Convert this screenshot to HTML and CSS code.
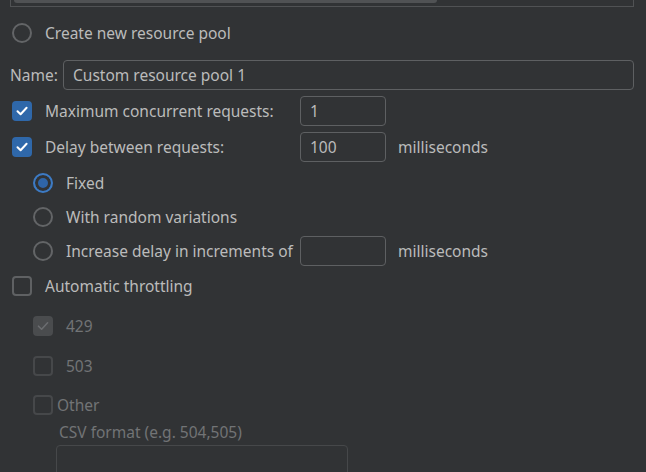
FILE: index.html
```html
<!DOCTYPE html>
<html>
<head>
    <title>Resource pool</title>
    <link rel="stylesheet" href="styles.css">
</head>
<body>
    <div class="pool-list">
        <div class="scroll-thumb"></div>
    </div>

    <div class="row row-create">
        <span class="radio"></span>
        <span class="label">Create new resource pool</span>
    </div>

    <div class="row row-name">
        <span class="name-label">Name:</span>
        <div class="field field-wide">Custom resource pool 1</div>
    </div>

    <div class="row row-option">
        <span class="check checked">
            <svg viewBox="0 0 20 20" width="20" height="20"><path d="M5.5 10.2 L8.6 13.2 L14.6 6.8" fill="none" stroke="#ffffff" stroke-width="2" stroke-linecap="round" stroke-linejoin="round"/></svg>
        </span>
        <span class="label label-fixed">Maximum concurrent requests:</span>
        <div class="field field-small">1</div>
    </div>

    <div class="row row-option">
        <span class="check checked">
            <svg viewBox="0 0 20 20" width="20" height="20"><path d="M5.5 10.2 L8.6 13.2 L14.6 6.8" fill="none" stroke="#ffffff" stroke-width="2" stroke-linecap="round" stroke-linejoin="round"/></svg>
        </span>
        <span class="label label-fixed">Delay between requests:</span>
        <div class="field field-small">100</div>
        <span class="unit">milliseconds</span>
    </div>

    <div class="row row-option indent">
        <span class="radio selected"></span>
        <span class="label">Fixed</span>
    </div>

    <div class="row row-random indent">
        <span class="radio"></span>
        <span class="label">With random variations</span>
    </div>

    <div class="row row-option indent">
        <span class="radio"></span>
        <span class="label label-increase">Increase delay in increments of</span>
        <div class="field field-small"></div>
        <span class="unit">milliseconds</span>
    </div>

    <div class="row row-auto">
        <span class="check"></span>
        <span class="label">Automatic throttling</span>
    </div>

    <div class="row row-code first-code indent">
        <span class="check disabled checked-off">
            <svg viewBox="0 0 20 20" width="20" height="20"><path d="M5.5 10.2 L8.6 13.2 L14.6 6.8" fill="none" stroke="#6b6d70" stroke-width="1.6" stroke-linecap="round" stroke-linejoin="round"/></svg>
        </span>
        <span class="label muted">429</span>
    </div>

    <div class="row row-code indent">
        <span class="check disabled"></span>
        <span class="label muted">503</span>
    </div>

    <div class="row row-other indent">
        <span class="check disabled"></span>
        <span class="label muted tight">Other</span>
    </div>

    <div class="csv">
        <div class="csv-label">CSV format (e.g. 504,505)</div>
        <div class="field field-csv disabled-field"></div>
    </div>
</body>
</html>
```

FILE: styles.css
```css
body {
  margin: 0;
  padding: 0 12px 0 10px;
  background-color: #313335;
  font-family: "Noto Sans", "Open Sans", sans-serif;
  font-size: 15.5px;
  color: #bbbbbb;
  overflow: hidden;
}

.pool-list {
  height: 6px;
  border: 1px solid #505254;
  border-top: none;
  padding-left: 3px;
}

.scroll-thumb {
  width: 423px;
  height: 3px;
  background-color: #505254;
  border-radius: 0 0 3px 3px;
}

.row {
  display: flex;
  align-items: center;
  height: 36px;
}

.row-create {
  height: 30px;
  margin-top: 11px;
}

.row-name {
  height: 30px;
  margin-top: 12px;
  margin-bottom: 3px;
}

.row-random {
  height: 32px;
}

.row-auto {
  height: 34px;
}

.row-code {
  height: 40px;
}

.first-code {
  margin-top: 3px;
}

.row-other {
  height: 38px;
}

.indent {
  padding-left: 21px;
}

.radio {
  box-sizing: border-box;
  width: 20px;
  height: 20px;
  margin-left: 2px;
  border: 2px solid #636567;
  border-radius: 50%;
  flex-shrink: 0;
}

.radio.selected {
  border-color: #3d7bc4;
  background-color: #2f65a8;
  box-shadow: inset 0 0 0 3px #313335;
}

.check {
  box-sizing: border-box;
  display: flex;
  width: 20px;
  height: 20px;
  margin-left: 2px;
  border: 2px solid #5f6163;
  border-radius: 4px;
  flex-shrink: 0;
}

.check svg {
  margin: -2px;
}

.check.checked {
  border-color: #2f68aa;
  background-color: #2f68aa;
}

.check.disabled {
  border-color: #46484a;
}

.check.checked-off {
  border-color: #4a4c4e;
  background-color: #4a4c4e;
}

.label {
  margin-left: 13px;
  white-space: nowrap;
}

.label.tight {
  margin-left: 4px;
}

.label-fixed {
  width: 255px;
}

.label-increase {
  width: 234px;
}

.muted {
  color: #727476;
}

.name-label {
  width: 53px;
}

.field {
  box-sizing: border-box;
  height: 30px;
  padding: 0 9px;
  border: 1px solid #5e6062;
  border-radius: 4px;
  line-height: 28px;
  color: #bbbbbb;
}

.field-wide {
  flex: 1;
}

.field-small {
  width: 86px;
}

.unit {
  margin-left: 12px;
}

.csv {
  padding-left: 49px;
}

.csv-label {
  height: 16px;
  line-height: 16px;
  color: #727476;
}

.field-csv {
  width: 292px;
  height: 32px;
  margin-top: 5px;
  margin-left: -3px;
}

.disabled-field {
  border-color: #46484a;
}
```
